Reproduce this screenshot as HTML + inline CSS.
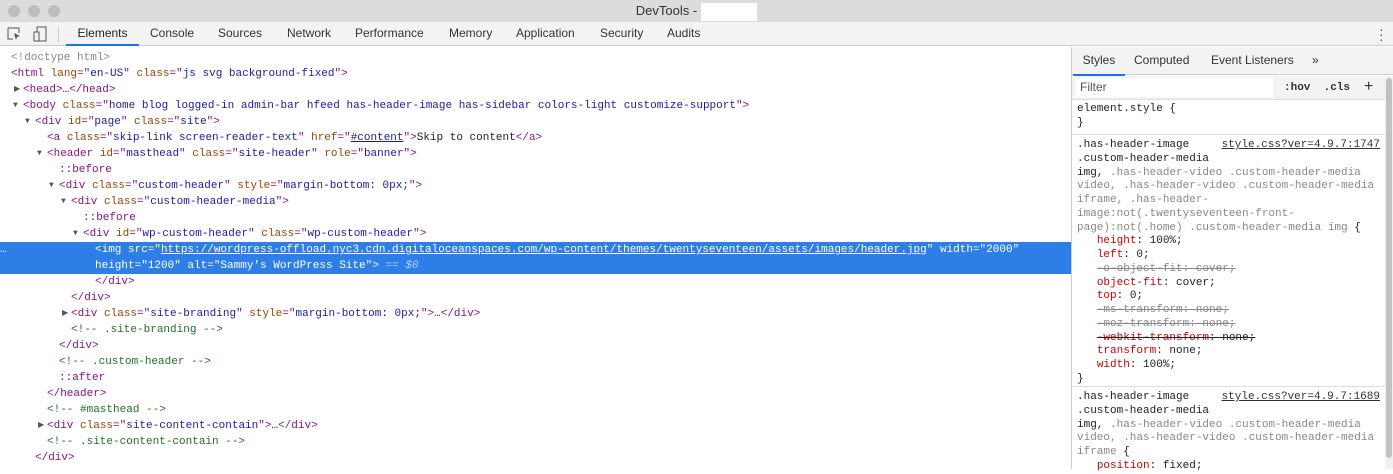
<!DOCTYPE html>
<html><head><style>
*{margin:0;padding:0;box-sizing:border-box}
body{width:1393px;height:469px;overflow:hidden;background:#fff;font-family:"Liberation Sans",sans-serif;position:relative}
.title{position:absolute;left:0;top:0;width:1393px;height:22px;background:#dcdcdc;text-align:center;font-size:13px;line-height:22px;color:#333}
.dot{position:absolute;top:5px;width:12px;height:12px;border-radius:50%;background:#bdbdbd}
.blank{display:inline-block;width:56px;height:18px;background:#fff;vertical-align:middle;margin-left:4px}
.tb{position:absolute;left:0;top:22px;width:1393px;height:24px;background:#f3f3f3;border-bottom:1px solid #ccc}
.tab{position:absolute;top:0;height:24px;font-size:12px;line-height:23px;color:#333}
.sel{border-bottom:2px solid #1a73e8;color:#222}
.dom{position:absolute;left:0;top:47px;width:1071px;height:422px;font-family:"Liberation Mono",monospace;font-size:11px;color:#222}
.l{position:absolute;left:0;width:1071px;height:16px;line-height:16px;white-space:pre}
.t{color:#881280}.a{color:#994500}.v{color:#1a1aa6}.c{color:#236e25}.g{color:#888}
.u{text-decoration:underline}
.tri{position:absolute;font-size:8px;color:#555}
.hl{background:#2d7ee6;color:#fff}
.hl span{color:#fff}
.side{position:absolute;left:1071px;top:47px;width:322px;height:422px;border-left:1px solid #ccc;background:#fff}
.stabs{position:absolute;left:0;top:0;width:322px;height:28px;background:#f3f3f3;border-bottom:1px solid #ccc;font-size:12px}
.st{position:absolute;top:0;line-height:27px;color:#333}
.filter{position:absolute;left:0;top:29px;width:314px;height:24px;background:#f3f3f3;border-bottom:1px solid #ddd;font-size:12px}
.css{position:absolute;left:0;width:314px;font-family:"Liberation Mono",monospace;font-size:11px;line-height:13.75px;color:#222;padding-left:5px;white-space:pre}
.p{color:#c80000}.s{text-decoration:line-through;color:#888}.s .p{color:#888}
.lnk{position:absolute;right:6px;text-decoration:underline;color:#333}
.scroll{position:absolute;right:0;top:29px;width:8px;height:393px;background:#f0f0f0}
</style></head><body>
<div class="title"><span class="dot" style="left:8px"></span><span class="dot" style="left:28px"></span><span class="dot" style="left:48px"></span>DevTools -<span class="blank"></span></div>
<div class="tb">
<svg style="position:absolute;left:6px;top:4px" width="16" height="16"><path d="M2 2h11v5M2 2v11h5" stroke="#555" fill="none"/><path d="M8 7l6 3-3 1-1 3z" fill="#555"/></svg>
<svg style="position:absolute;left:33px;top:4px" width="14" height="16"><rect x="4" y="1" width="9" height="14" stroke="#555" fill="none"/><rect x="1" y="6" width="5" height="9" stroke="#555" fill="#f3f3f3"/></svg>
<div style="position:absolute;left:58px;top:4px;width:1px;height:16px;background:#ccc"></div>
<div class="tab sel" style="left:66px;width:73px;text-align:center">Elements</div>
<div class="tab" style="left:150px">Console</div>
<div class="tab" style="left:218px">Sources</div>
<div class="tab" style="left:287px">Network</div>
<div class="tab" style="left:355px">Performance</div>
<div class="tab" style="left:449px">Memory</div>
<div class="tab" style="left:516px">Application</div>
<div class="tab" style="left:600px">Security</div>
<div class="tab" style="left:667px">Audits</div>
<div style="position:absolute;left:1379px;top:5px;font-size:14px;line-height:5px;color:#555">·<br>·<br>·</div>
</div>
<div class="dom">
<div class="l g" style="top:3px;padding-left:11px">&lt;!doctype html&gt;</div>
<div class="l" style="top:19px;padding-left:11px"><span class="t">&lt;html</span> <span class="a">lang</span><span class="t">="</span><span class="v">en-US</span><span class="t">"</span> <span class="a">class</span><span class="t">="</span><span class="v">js svg background-fixed</span><span class="t">"&gt;</span></div>
<div class="l" style="top:35px;padding-left:23px"><span class="tri" style="left:14px">▶</span><span class="t">&lt;head&gt;</span>…<span class="t">&lt;/head&gt;</span></div>
<div class="l" style="top:51px;padding-left:23px"><span class="tri" style="left:13px">▼</span><span class="t">&lt;body</span> <span class="a">class</span><span class="t">="</span><span class="v">home blog logged-in admin-bar hfeed has-header-image has-sidebar colors-light customize-support</span><span class="t">"&gt;</span></div>
<div class="l" style="top:67px;padding-left:35px"><span class="tri" style="left:25px">▼</span><span class="t">&lt;div</span> <span class="a">id</span><span class="t">="</span><span class="v">page</span><span class="t">"</span> <span class="a">class</span><span class="t">="</span><span class="v">site</span><span class="t">"&gt;</span></div>
<div class="l" style="top:83px;padding-left:47px"><span class="t">&lt;a</span> <span class="a">class</span><span class="t">="</span><span class="v">skip-link screen-reader-text</span><span class="t">"</span> <span class="a">href</span><span class="t">="</span><span class="v u">#content</span><span class="t">"&gt;</span>Skip to content<span class="t">&lt;/a&gt;</span></div>
<div class="l" style="top:99px;padding-left:47px"><span class="tri" style="left:37px">▼</span><span class="t">&lt;header</span> <span class="a">id</span><span class="t">="</span><span class="v">masthead</span><span class="t">"</span> <span class="a">class</span><span class="t">="</span><span class="v">site-header</span><span class="t">"</span> <span class="a">role</span><span class="t">="</span><span class="v">banner</span><span class="t">"&gt;</span></div>
<div class="l t" style="top:115px;padding-left:59px">::before</div>
<div class="l" style="top:131px;padding-left:59px"><span class="tri" style="left:49px">▼</span><span class="t">&lt;div</span> <span class="a">class</span><span class="t">="</span><span class="v">custom-header</span><span class="t">"</span> <span class="a">style</span><span class="t">="</span><span class="v">margin-bottom: 0px;</span><span class="t">"&gt;</span></div>
<div class="l" style="top:147px;padding-left:71px"><span class="tri" style="left:61px">▼</span><span class="t">&lt;div</span> <span class="a">class</span><span class="t">="</span><span class="v">custom-header-media</span><span class="t">"&gt;</span></div>
<div class="l t" style="top:163px;padding-left:83px">::before</div>
<div class="l" style="top:179px;padding-left:83px"><span class="tri" style="left:73px">▼</span><span class="t">&lt;div</span> <span class="a">id</span><span class="t">="</span><span class="v">wp-custom-header</span><span class="t">"</span> <span class="a">class</span><span class="t">="</span><span class="v">wp-custom-header</span><span class="t">"&gt;</span></div>
<div class="l hl" style="top:195px;height:32px;padding-left:95px;line-height:16px">&lt;img src="<u>https://wordpress-offload.nyc3.cdn.digitaloceanspaces.com/wp-content/themes/twentyseventeen/assets/images/header.jpg</u>" width="2000"
height="1200" alt="Sammy's WordPress Site"&gt; <span style="color:#b8d4f8">== <i>$0</i></span><span style="position:absolute;left:0;top:0">…</span></div>
<div class="l t" style="top:227px;padding-left:95px">&lt;/div&gt;</div>
<div class="l t" style="top:243px;padding-left:71px">&lt;/div&gt;</div>
<div class="l" style="top:259px;padding-left:71px"><span class="tri" style="left:62px">▶</span><span class="t">&lt;div</span> <span class="a">class</span><span class="t">="</span><span class="v">site-branding</span><span class="t">"</span> <span class="a">style</span><span class="t">="</span><span class="v">margin-bottom: 0px;</span><span class="t">"&gt;</span>…<span class="t">&lt;/div&gt;</span></div>
<div class="l c" style="top:275px;padding-left:71px">&lt;!-- .site-branding --&gt;</div>
<div class="l t" style="top:291px;padding-left:59px">&lt;/div&gt;</div>
<div class="l c" style="top:307px;padding-left:59px">&lt;!-- .custom-header --&gt;</div>
<div class="l t" style="top:323px;padding-left:59px">::after</div>
<div class="l t" style="top:339px;padding-left:47px">&lt;/header&gt;</div>
<div class="l c" style="top:355px;padding-left:47px">&lt;!-- #masthead --&gt;</div>
<div class="l" style="top:371px;padding-left:47px"><span class="tri" style="left:38px">▶</span><span class="t">&lt;div</span> <span class="a">class</span><span class="t">="</span><span class="v">site-content-contain</span><span class="t">"&gt;</span>…<span class="t">&lt;/div&gt;</span></div>
<div class="l c" style="top:387px;padding-left:47px">&lt;!-- .site-content-contain --&gt;</div>
<div class="l t" style="top:403px;padding-left:35px">&lt;/div&gt;</div>
</div>
<div class="side">
<div class="stabs">
<div class="st" style="left:1px;width:52px;text-align:center;border-bottom:2px solid #1a73e8">Styles</div>
<div class="st" style="left:62px">Computed</div>
<div class="st" style="left:139px">Event Listeners</div>
<div class="st" style="left:240px">»</div>
</div>
<div class="filter"><div style="position:absolute;left:3px;top:2px;width:198px;height:19px;background:#fff;padding-left:5px;line-height:19px;color:#555">Filter</div>
<div style="position:absolute;left:212px;top:0;line-height:24px;font-family:'Liberation Mono',monospace;font-size:11px;font-weight:bold;color:#333">:hov &nbsp;.cls</div>
<div style="position:absolute;left:292px;top:0;line-height:22px;font-size:16px;color:#333">+</div></div>
<div class="css" style="top:56px;height:32px;border-bottom:1px solid #ddd">element.style {
}</div>
<div class="css" style="top:92px;height:248px;border-bottom:1px solid #ddd">.has-header-image<span class="lnk">style.css?ver=4.9.7:1747</span>
.custom-header-media
img, <span class="g">.has-header-video .custom-header-media
video, .has-header-video .custom-header-media
iframe, .has-header-
image:not(.twentyseventeen-front-
page):not(.home) .custom-header-media img</span> {
   <span class="p">height</span>: 100%;
   <span class="p">left</span>: 0;
   <span class="s"><span class="p">-o-object-fit</span>: cover;</span>
   <span class="p">object-fit</span>: cover;
   <span class="p">top</span>: 0;
   <span class="s"><span class="p">-ms-transform</span>: none;</span>
   <span class="s"><span class="p">-moz-transform</span>: none;</span>
   <span class="s" style="color:#222"><span class="p" style="color:#c80000">-webkit-transform</span>: none;</span>
   <span class="p">transform</span>: none;
   <span class="p">width</span>: 100%;
}</div>
<div class="css" style="top:344px;height:78px">.has-header-image<span class="lnk">style.css?ver=4.9.7:1689</span>
.custom-header-media
img, <span class="g">.has-header-video .custom-header-media
video, .has-header-video .custom-header-media
iframe</span> {
   <span class="p">position</span>: fixed;</div>
<div class="scroll"><div style="position:absolute;left:1px;top:2px;width:6px;height:380px;border-radius:3px;background:#c1c1c1"></div></div>
</div>
</body></html>
